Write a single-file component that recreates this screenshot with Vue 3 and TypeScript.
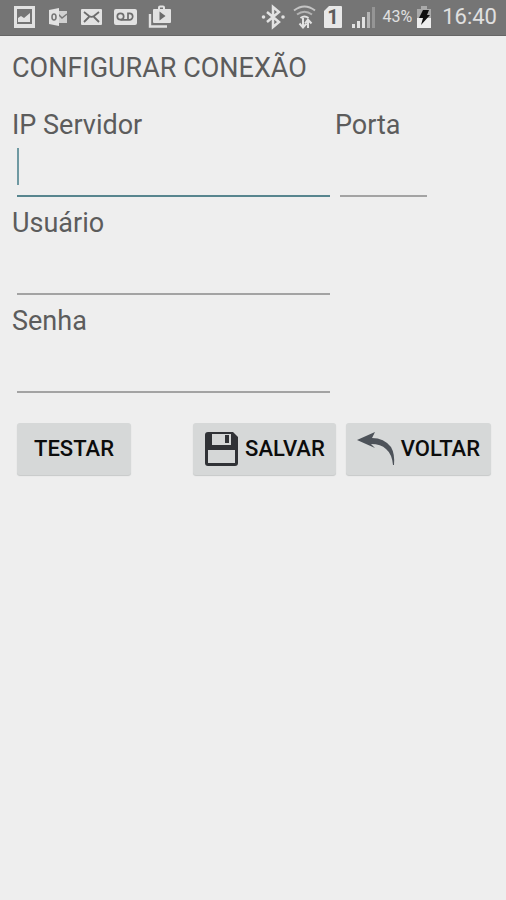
<script setup lang="ts">
import { ref } from 'vue'

const server = ref('')
const port = ref('')
const user = ref('')
const password = ref('')
</script>

<template>
  <div class="screen">
    <header class="status">
      <div class="group notices">
        <svg width="22" height="24" viewBox="0 0 22 24" aria-hidden="true">
          <path fill="#e2e2e2" fill-rule="evenodd" d="M0 1h21v22H0zM3 4v15h15V4z" />
          <path fill="#e2e2e2" d="M4 17v-4l3-2 3 2 6-5v9z" />
        </svg>
        <svg width="22" height="24" viewBox="0 0 22 24" aria-hidden="true">
          <path fill="#d0d0d0" d="M10 6h10v12H10z" />
          <path fill="none" stroke="#777" stroke-width="1.5" d="M11 9l4 4 5-4" />
          <path fill="#e2e2e2" d="M2 5l10-2v18L2 19z" />
          <ellipse cx="7" cy="12" rx="2" ry="3" fill="none" stroke="#777" stroke-width="1.6" />
        </svg>
        <svg width="22" height="24" viewBox="0 0 22 24" aria-hidden="true">
          <rect x="1" y="4" width="21" height="16" rx="1" fill="#e2e2e2" />
          <path fill="none" stroke="#6c6c6c" stroke-width="1.8" d="M4 7l5 4q2.500 1.800 5 0l5-4M4 17l5-5M19 17l-5-5" />
        </svg>
        <svg width="24" height="24" viewBox="0 0 24 24" aria-hidden="true">
          <rect x="1" y="4" width="23" height="16" rx="2" fill="#e2e2e2" />
          <g fill="none" stroke="#6c6c6c" stroke-width="1.700">
            <circle cx="7.500" cy="11.500" r="3.200" />
            <path d="M7.500 14.800h9M15 8.400h1.500a3.200 3.200 0 0 1 0 6.400H15z" />
          </g>
        </svg>
        <svg width="24" height="24" viewBox="0 0 24 24" aria-hidden="true">
          <path fill="none" stroke="#e2e2e2" stroke-width="2.400" d="M2 9v12.500h17" />
          <path fill="none" stroke="#e2e2e2" stroke-width="2" d="M11 5V2.500Q11 1.500 12 1.500h3q1 0 1 1V5" />
          <rect x="5" y="4" width="18" height="14" rx="1" fill="#e2e2e2" />
          <path fill="#6c6c6c" d="M11.500 6.500v9l6-4.500z" />
        </svg>
      </div>
      <div class="group system">
        <svg width="24" height="24" viewBox="0 0 24 24" aria-hidden="true">
          <path fill="none" stroke="#e2e2e2" stroke-width="2.500" d="M6 7l12 10-6 5V2l6 5L6 17" />
          <circle cx="2.500" cy="12" r="1.800" fill="#e2e2e2" />
          <circle cx="22" cy="12" r="1.800" fill="#e2e2e2" />
        </svg>
        <svg width="24" height="24" viewBox="0 0 24 24" aria-hidden="true">
          <g fill="none" stroke="#c4c4c4" stroke-width="2">
            <path d="M1 5.500q10.500-8 21 0" />
            <path stroke="#b4b4b4" d="M4 9.500q7.500-5.500 15 0" />
            <path stroke="#e2e2e2" d="M7.500 13q4-3 8 0" />
          </g>
          <path fill="none" stroke="#e2e2e2" stroke-width="2" d="M10 13v9M6.500 18.500l3.500 4 3.500-4M15 23v-8M12 18.500l3-4 3.500 4" />
        </svg>
        <svg width="18" height="24" viewBox="0 0 18 24" aria-hidden="true">
          <path fill="#e8e8e8" d="M4 1h12q1 0 1 1v20q0 1-1 1H0q-1 0-1-1V6z" />
          <text class="slot" x="8" y="19" text-anchor="middle">1</text>
        </svg>
        <svg width="24" height="24" viewBox="0 0 24 24" aria-hidden="true">
          <path fill="#e2e2e2" d="M1 19h3v4H1zM6 16h3v7H6zM11 12h3v11h-3z" />
          <path fill="#b4b4b4" d="M16 7h3v16h-3z" />
          <path fill="#959595" d="M21 2h3v21h-3z" />
        </svg>
        <div class="power">
          <span class="percent">43%</span>
          <svg width="16" height="24" viewBox="0 0 16 24" aria-hidden="true">
            <path fill="#a9a9a9" d="M5 1h6v3h4v9H1V4h4z" />
            <path fill="#eee" d="M1 13h14v10H1z" />
            <path fill="#111" d="M7 5h6l-2 5h3L5 20l2-7H3z" />
          </svg>
        </div>
        <time class="clock">16:40</time>
      </div>
    </header>

    <main class="content">
      <h1 class="title">CONFIGURAR CONEXÃO</h1>
      <form class="form" @submit.prevent>
        <div class="field">
          <label for="server">IP Servidor</label>
          <div class="entry active">
            <input id="server" v-model="server" type="text" />
            <span v-if="!server" class="caret"></span>
          </div>
        </div>
        <div class="field port">
          <label for="port">Porta</label>
          <div class="entry"><input id="port" v-model="port" type="text" inputmode="numeric" /></div>
        </div>
        <div class="field first">
          <label for="user">Usuário</label>
          <div class="entry"><input id="user" v-model="user" type="text" /></div>
        </div>
        <div class="field first">
          <label for="password">Senha</label>
          <div class="entry"><input id="password" v-model="password" type="password" /></div>
        </div>
        <div class="actions">
          <button type="button" class="test">TESTAR</button>
          <button type="submit">
            <svg width="36" height="36" viewBox="0 0 36 36" aria-hidden="true">
              <path fill="#303236" d="M4 1h25l5 5v26q0 3-3 3H4q-3 0-3-3V4q0-3 3-3z" />
              <path fill="#d5d7d7" d="M8 3h19v11H8z" />
              <path fill="#303236" d="M21 4h4v8h-4z" />
              <path fill="#d5d7d7" d="M4 19h27v13H4z" />
            </svg>
            <span>SALVAR</span>
          </button>
          <button type="button">
            <svg width="39" height="36" viewBox="0 0 39 36" aria-hidden="true">
              <path fill="#4d5259" d="M0 9L18 1l-3 6q12 0 19 9 4 7 3 18h-1q-1-11-7-16-5-5-15-5l4 4z" />
            </svg>
            <span>VOLTAR</span>
          </button>
        </div>
      </form>
    </main>
  </div>
</template>

<style>
body {
  margin: 0;
  background: #eeeeee;
}
</style>

<style scoped>
.screen {
  min-height: 100vh;
  background: #eeeeee;
  color: #5c5c5c;
  font-family: Roboto, "Liberation Sans", sans-serif;
}
.status {
  box-sizing: border-box;
  height: 36px;
  padding: 0 9px 2px 14px;
  display: flex;
  align-items: center;
  justify-content: space-between;
  background: #757575;
  border-bottom: 1px solid #666666;
  color: #e0e0e0;
}
.group {
  display: flex;
  align-items: center;
}
.notices {
  gap: 11px;
}
.system {
  gap: 8px;
}
svg {
  display: block;
  flex: none;
  overflow: visible;
}
.slot {
  fill: #5c5c5c;
  font-size: 20px;
  font-weight: 700;
}
.power {
  display: flex;
  align-items: center;
  gap: 4px;
  padding-right: 2px;
}
.percent {
  font-size: 16px;
}
.clock {
  font-size: 22px;
}
.content {
  padding: 16px 12px;
}
.title {
  margin: 0 0 24px;
  font-size: 27px;
  line-height: 33px;
  font-weight: 400;
}
.form {
  display: grid;
  grid-template-columns: 67fr 33fr;
  font-size: 27px;
  line-height: 33px;
}
.field {
  display: flex;
  flex-direction: column;
}
.field label {
  align-self: flex-start;
}
.first {
  grid-column: 1;
}
.port .entry {
  width: 60%;
}
.entry {
  box-sizing: border-box;
  position: relative;
  height: 65px;
  padding: 4px 5px 10px;
}
.port .entry {
  padding-right: 3px;
}
.entry input {
  box-sizing: border-box;
  display: block;
  width: 100%;
  height: 51px;
  padding: 0 2px 8px;
  border: 0;
  border-bottom: 2px solid #a3a3a3;
  border-radius: 0;
  outline: 0;
  background: transparent;
  color: #222222;
  font: inherit;
}
.active input {
  border-bottom-color: #57858e;
  caret-color: transparent;
}
.caret {
  position: absolute;
  left: 5px;
  top: 6px;
  width: 2px;
  height: 37px;
  background: #6f99a2;
  pointer-events: none;
}
.actions {
  grid-column: 1 / -1;
  display: flex;
  gap: 10px;
  padding: 20px 3px 0 5px;
}
button {
  height: 52px;
  padding: 0 11px;
  display: flex;
  align-items: center;
  gap: 5px;
  border: 0;
  border-radius: 3px;
  background: #d6d8d8;
  box-shadow: 0 1px 1px #c6c8c8;
  color: #0c0c0c;
  font: 500 22px/26px Roboto, "Liberation Sans", sans-serif;
}
.test {
  padding: 0 17px;
  margin-right: auto;
}
</style>
